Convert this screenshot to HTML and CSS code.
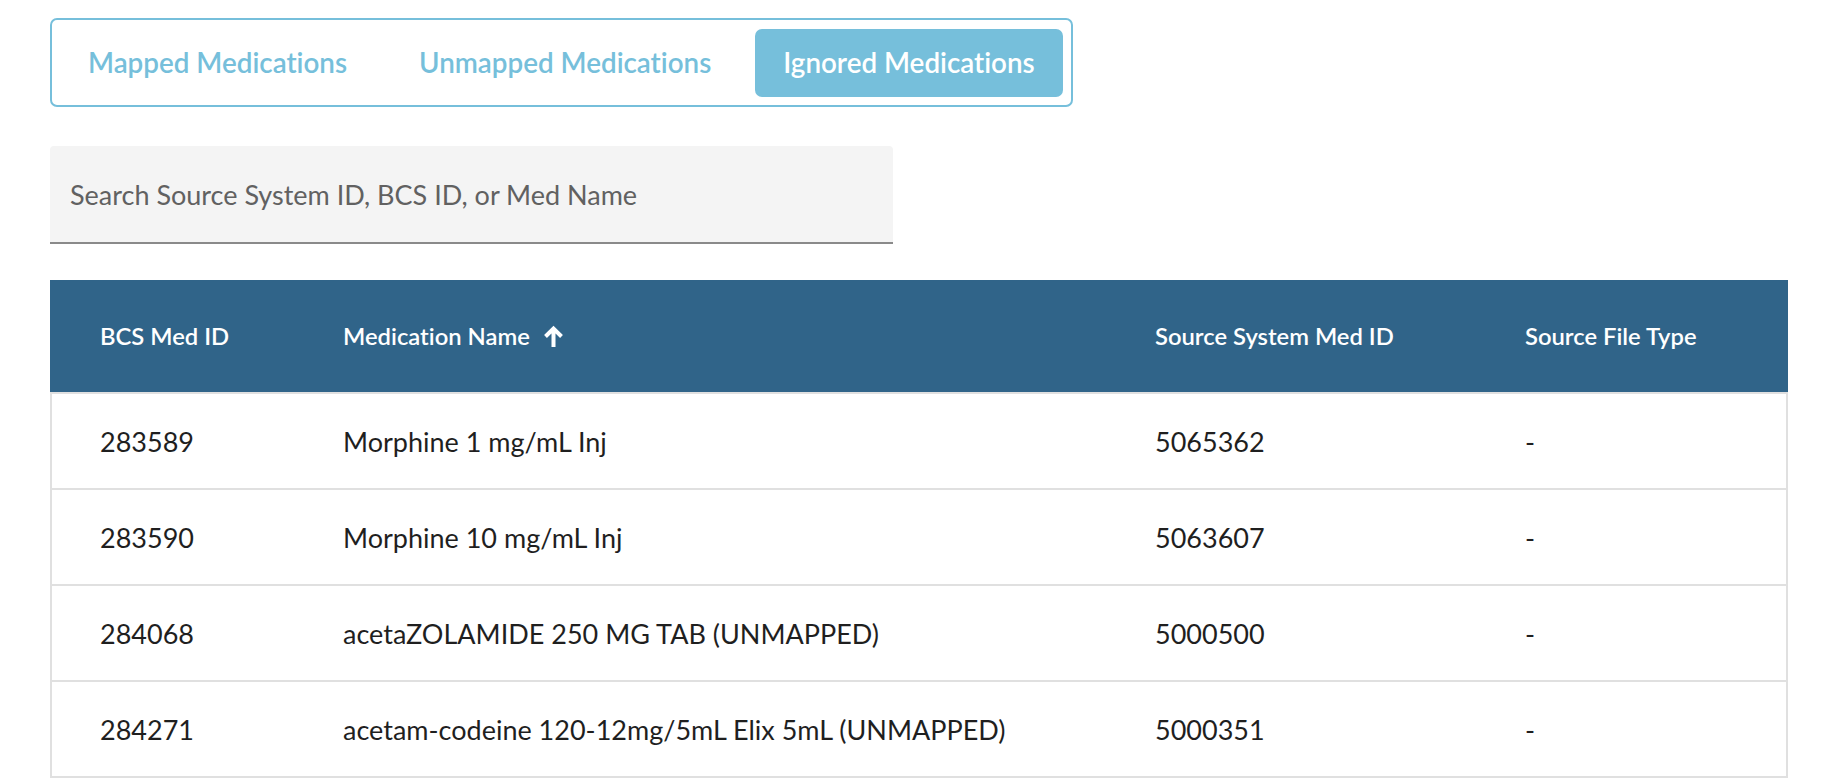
FILE: index.html
```html
<!DOCTYPE html>
<html lang="en">
<head>
<meta charset="utf-8">
<title>Ignored Medications</title>
<link rel="stylesheet" href="styles.css">
</head>
<body>
<main class="page">
  <nav class="tabs">
    <button class="tab">Mapped Medications</button>
    <button class="tab">Unmapped Medications</button>
    <button class="tab tab-active">Ignored Medications</button>
  </nav>

  <div class="search">
    <input class="search-input" type="text" placeholder="Search Source System ID, BCS ID, or Med Name">
  </div>

  <section class="table">
    <div class="thead">
      <div class="cell">BCS Med ID</div>
      <div class="cell sort">Medication Name
        <svg class="sort-icon" width="21" height="23" viewBox="0 0 21 23" aria-hidden="true">
          <path d="M10.5 22V3.5M2.5 11.5l8-8 8 8" fill="none" stroke="#fff" stroke-width="4" stroke-linecap="butt" stroke-linejoin="miter"/>
        </svg>
      </div>
      <div class="cell">Source System Med ID</div>
      <div class="cell">Source File Type</div>
    </div>
    <div class="row">
      <div class="cell">283589</div>
      <div class="cell">Morphine 1 mg/mL Inj</div>
      <div class="cell">5065362</div>
      <div class="cell">-</div>
    </div>
    <div class="row">
      <div class="cell">283590</div>
      <div class="cell">Morphine 10 mg/mL Inj</div>
      <div class="cell">5063607</div>
      <div class="cell">-</div>
    </div>
    <div class="row">
      <div class="cell">284068</div>
      <div class="cell">acetaZOLAMIDE 250 MG TAB (UNMAPPED)</div>
      <div class="cell">5000500</div>
      <div class="cell">-</div>
    </div>
    <div class="row row-last">
      <div class="cell">284271</div>
      <div class="cell">acetam-codeine 120-12mg/5mL Elix 5mL (UNMAPPED)</div>
      <div class="cell">5000351</div>
      <div class="cell">-</div>
    </div>
  </section>
</main>
</body>
</html>
```

FILE: styles.css
```css
* { box-sizing: border-box; }

html, body {
  margin: 0;
  padding: 0;
  background: #ffffff;
}

body {
  font-family: Lato, "Liberation Sans", sans-serif;
  font-variant-ligatures: none;
  color: #1f1f1f;
}

.page {
  padding: 18px 46px 0 50px;
}

.tabs {
  display: inline-flex;
  align-items: center;
  gap: 16px;
  padding: 8px;
  height: 89px;
  border: 2px solid #76bfdb;
  border-radius: 7px;
}

.tab {
  height: 68px;
  padding: 0 28px;
  border: 0;
  border-radius: 7px;
  background: transparent;
  color: #76bfdb;
  font-family: Lato, "Liberation Sans", sans-serif;
  font-variant-ligatures: none;
  font-weight: 600;
  font-size: 27.8px;
  cursor: pointer;
}

.tab-active {
  background: #76bfdb;
  color: #ffffff;
}

.search {
  margin-top: 39px;
  width: 843px;
}

.search-input {
  display: block;
  width: 100%;
  height: 98px;
  padding: 0 20px;
  border: 0;
  border-bottom: 2px solid #8a8a8a;
  border-radius: 4px 4px 0 0;
  background: #f4f4f4;
  font-family: Lato, "Liberation Sans", sans-serif;
  font-size: 27px;
  color: #333;
  outline: none;
}

.search-input::placeholder {
  color: #616161;
}

.table {
  margin-top: 36px;
  width: 1738px;
}

.thead,
.row {
  display: grid;
  align-items: center;
}

.thead {
  grid-template-columns: 243px 812px 370px 1fr;
  height: 112px;
  background: #306489;
  color: #ffffff;
  font-weight: 600;
  font-size: 23.8px;
}

.row {
  grid-template-columns: 241px 812px 370px 1fr;
  height: 96px;
  border-top: 2px solid #e0e0e0;
  border-left: 2px solid #e0e0e0;
  border-right: 2px solid #e0e0e0;
  font-size: 27px;
  color: #1f1f1f;
}

.row-last {
  height: 98px;
  border-bottom: 2px solid #e0e0e0;
}

.cell {
  padding-left: 50px;
  white-space: nowrap;
}

.row .cell:first-child {
  padding-left: 48px;
}

.sort {
  display: flex;
  align-items: center;
  gap: 13px;
}

.sort-icon {
  display: block;
}
```
